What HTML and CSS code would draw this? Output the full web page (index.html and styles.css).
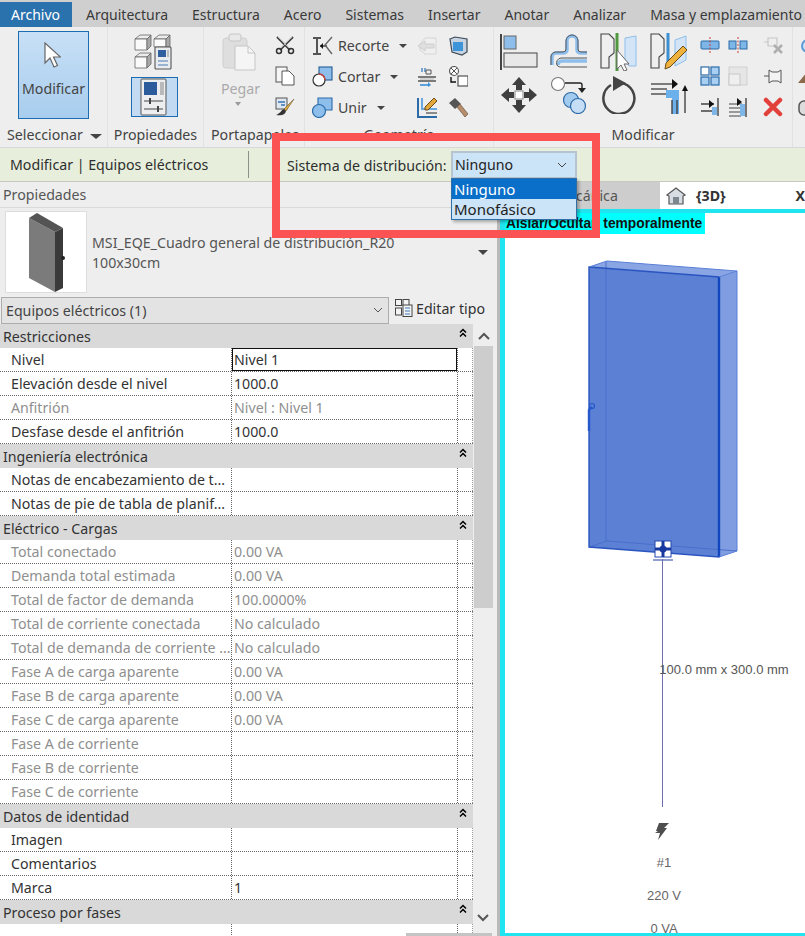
FILE: index.html
```html
<!DOCTYPE html>
<html lang="es">
<head>
<meta charset="utf-8">
<title>Modificar | Equipos eléctricos</title>
<link rel="stylesheet" href="styles.css">
</head>
<body>
<svg class="defs" width="0" height="0"><symbol id="dbl" viewBox="0 0 8 10"><path d="M1 4.500l3-3 3 3M1 8.500l3-3 3 3" fill="none" stroke="#000" stroke-width="1.500"/></symbol></svg>
<div class="app">
  <nav class="tabs">
    <span class="tab active">Archivo</span>
    <span class="tab">Arquitectura</span>
    <span class="tab">Estructura</span>
    <span class="tab">Acero</span>
    <span class="tab">Sistemas</span>
    <span class="tab">Insertar</span>
    <span class="tab">Anotar</span>
    <span class="tab">Analizar</span>
    <span class="tab">Masa y emplazamiento</span>
  </nav>

  <div class="ribbon">
    <section class="group g-select">
      <div class="body">
        <button class="modify">
          <svg width="18" height="26" viewBox="0 0 18 26"><path d="M2 1v20l5-5 4 9 3.500-1.500-4-8.500h7z" fill="#fff" stroke="#666" stroke-width="1.200"/></svg>
          <span>Modificar</span>
        </button>
      </div>
      <div class="label">Seleccionar <i class="caret dark"></i></div>
    </section>

    <section class="group g-props">
      <div class="body">
        <svg class="i-types" width="38" height="37" viewBox="0 0 38 37">
          <g stroke="#666" stroke-width=".8">
            <path d="M1 6l5-4h11l-4 4z" fill="#ececec"/><path d="M1 6h12v11H1z" fill="#fafafa"/><path d="M13 6l4-4v11l-4 4z" fill="#a8a8a8"/>
            <path d="M20 6l5-4h11l-4 4z" fill="#ececec"/><path d="M20 6h12v8H20z" fill="#fafafa"/><path d="M32 6l4-4v12h-4z" fill="#a8a8a8"/>
            <path d="M1 24l5-4h11l-4 4z" fill="#ececec"/><path d="M1 24h12v11H1z" fill="#fafafa"/><path d="M13 24l4-4v11l-4 4z" fill="#a8a8a8"/>
          </g>
          <rect x="21" y="14" width="16" height="22" rx="1" fill="#e9ecef" stroke="#555" stroke-width="1.100"/>
          <rect x="24" y="17" width="8" height="7" fill="#2f5f9e"/>
          <rect x="33" y="17" width="2" height="7" fill="#bbb"/>
          <path d="M24 28h10M24 32h10" stroke="#4a79b5" stroke-width="1.200"/>
        </svg>
        <div class="props-btn">
          <svg width="27" height="38" viewBox="0 0 27 38">
            <rect x="1" y="1" width="25" height="36" rx="1" fill="#eceef0" stroke="#555"/>
            <rect x="4" y="4" width="13" height="13" fill="#2c5c9c"/>
            <rect x="20" y="4" width="4" height="13" fill="#b9b9b9"/>
            <path d="M4 23h19M4 31h19" stroke="#444" stroke-width="1.200"/>
            <path d="M10 20v6M18 28v6" stroke="#444" stroke-width="2"/>
          </svg>
        </div>
      </div>
      <div class="label">Propiedades</div>
    </section>

    <section class="group g-clip">
      <div class="body">
        <div class="paste">
          <svg width="34" height="38" viewBox="0 0 34 38">
            <rect x="1" y="5" width="24" height="30" rx="3" fill="#dedede" stroke="#cfcfcf"/>
            <rect x="7" y="1" width="12" height="7" rx="2" fill="#e9e9e9" stroke="#c5c5c5"/>
            <path d="M13 13h13l7 7v17H13z" fill="#f5f5f5" stroke="#c5c5c5"/>
            <path d="M26 13v7h7" fill="none" stroke="#c5c5c5"/>
          </svg>
          <span class="pegar">Pegar</span>
          <i class="caret pale"></i>
        </div>
        <div class="stack">
          <svg width="20" height="20" viewBox="0 0 20 20"><path d="M2 2l13 13M18 2L5 15" stroke="#444" stroke-width="2"/><path d="M3 2l12 12M17 2L5 14" stroke="#ddd" stroke-width=".7"/><circle cx="4" cy="16" r="2.500" fill="none" stroke="#333" stroke-width="1.500"/><circle cx="16" cy="16" r="2.500" fill="none" stroke="#333" stroke-width="1.500"/></svg>
          <svg width="20" height="20" viewBox="0 0 20 20"><rect x="1" y="1" width="11" height="15" fill="#f6f6f6" stroke="#555"/><path d="M7 5h7l5 5v9H7z" fill="#fff" stroke="#555"/></svg>
          <svg width="20" height="20" viewBox="0 0 20 20"><rect x="1" y="1" width="11" height="11" fill="#dfe7f0" stroke="#555"/><path d="M3 5h7M6 8h4" stroke="#3a76b8" stroke-width="1.300"/><path d="M19 2L9 12l2 2z" fill="#e0a63a" stroke="#6a5a30" stroke-width=".6"/><path d="M9 12c-3 1-3 4-8 6 6 1 9 0 10-4z" fill="#333"/></svg>
        </div>
      </div>
      <div class="label">Portapapeles</div>
    </section>

    <section class="group g-geom">
      <div class="body">
        <div class="cmd">
          <svg width="21" height="20" viewBox="0 0 21 20"><path d="M1 2h8M1 18h8M5 2v16" stroke="#555" stroke-width="2" fill="none"/><path d="M8 10h7" stroke="#111" stroke-width="1.200"/><path d="M8 10l3-3v6z" fill="#111"/><path d="M20 1l-7 8 7 9" fill="none" stroke="#666" stroke-width="1.400"/></svg>
          <span>Recorte</span><i class="caret dark"></i>
        </div>
        <svg width="20" height="20" viewBox="0 0 20 20"><path d="M8 2h11v16H8l-5-4V8z" fill="#efefef" stroke="#d5d5d5"/><path d="M1 10l7-5v3h9v4H8v3z" fill="#dfdfdf" stroke="#cfcfcf"/></svg>
        <svg width="20" height="20" viewBox="0 0 20 20"><path d="M2 3l5-2 12 2v13l-5 3-10-3z" fill="#c7d3e0" stroke="#3d4a58" stroke-width="1.200"/><rect x="5" y="6" width="10" height="9" fill="#3d94d8"/></svg>
        <div class="cmd">
          <svg width="21" height="21" viewBox="0 0 21 21"><rect x="7" y="1" width="13" height="13" fill="#8ebfec" stroke="#245c94" stroke-width="1.100"/><circle cx="7" cy="14" r="6" fill="#fff" stroke="#333" stroke-width="1.200"/><path d="M7 8a6 6 0 0 1 6 6" fill="none" stroke="#c6433f" stroke-width="1.500"/></svg>
          <span>Cortar</span><i class="caret dark"></i>
        </div>
        <svg width="20" height="20" viewBox="0 0 20 20"><path d="M5 1v4M8 1v4" stroke="#3a7fc0" stroke-width="1.300"/><path d="M1 10h18M1 14h18" stroke="#555" stroke-width="1.300"/><path d="M9 3h5v4H9z" fill="#eee" stroke="#555"/><path d="M3 18h8" stroke="#3b8fd6" stroke-width="1.600"/><path d="M11 15l3 3-3 2z" fill="#3b8fd6"/><path d="M3 11h14v2H3z" fill="#d2d2d2"/></svg>
        <svg width="20" height="21" viewBox="0 0 20 21"><circle cx="6" cy="5" r="4.500" fill="#fff" stroke="#555" stroke-width="1.100"/><path d="M3 2l6 6M9 2L3 8" stroke="#555"/><rect x="10" y="10" width="10" height="10" fill="#fff" stroke="#444" stroke-width="1.100"/><path d="M3 11v5h5" fill="none" stroke="#111" stroke-width="1.400"/></svg>
        <div class="cmd">
          <svg width="21" height="21" viewBox="0 0 21 21"><path d="M6 1h14v12H6z" fill="#8ebfec" stroke="#2b6ba8" stroke-width="1.100"/><circle cx="7" cy="14" r="6.500" fill="#8ebfec" stroke="#2b6ba8" stroke-width="1.200"/></svg>
          <span>Unir</span><i class="caret dark"></i>
        </div>
        <svg width="21" height="21" viewBox="0 0 21 21"><path d="M1 1v19h19" fill="none" stroke="#2b6ba8" stroke-width="2"/><path d="M5 1v11h15" fill="none" stroke="#6aa9e0" stroke-width="2"/><path d="M8 10l9-9 3 3-9 9-3 0z" fill="#e2a83c" stroke="#6a4d18"/><path d="M9 16h11" stroke="#555" stroke-width="1.300"/></svg>
        <svg width="21" height="21" viewBox="0 0 21 21"><path d="M1 6l6-5 6 6-6 5z" fill="#555"/><path d="M9 10l3-3 8 10-3 3z" fill="#b58d6c" stroke="#6d543e" stroke-width=".7"/></svg>
      </div>
      <div class="label">Geometría</div>
    </section>

    <section class="group g-mod">
      <div class="body">
        <div class="big">
          <svg width="38" height="38" viewBox="0 0 38 38"><path d="M1 1v36" stroke="#444" stroke-width="2"/><rect x="4" y="3" width="12" height="13" fill="#8ebfec" stroke="#666"/><rect x="4" y="20" width="33" height="14" fill="#e8e8e8" stroke="#555" stroke-width="1.100"/></svg>
          <svg width="38" height="38" viewBox="0 0 38 38"><path d="M2 32v-8a4 4 0 0 1 4-4h8a3 3 0 0 0 3-3V8a5 5 0 0 1 10 0v9a3 3 0 0 0 3 3h7M37 28H12a4 4 0 0 0-4 4" fill="none" stroke="#8ebfec" stroke-width="3.500"/><path d="M1 32v-8a5 5 0 0 1 5-5h7a3 3 0 0 0 3-3V8a6 6 0 0 1 12 0v8a3 3 0 0 0 3 3h6M37 25H11a5 5 0 0 0-4 7c1 2 3 2 5 2h25" fill="none" stroke="#555"/></svg>
          <svg width="38" height="38" viewBox="0 0 38 38"><path d="M1 1h8l5 5v14l-5 4v11H1z" fill="#efefef" stroke="#444" stroke-width="1.100"/><path d="M25 5l11-2v30l-7 0-4-6z" fill="#d2e4f6" stroke="#8ebfec"/><path d="M17 0v38" stroke="#4f9a3e" stroke-width="3"/><path d="M17 17v19l4-4 3 6 3-1-3-6h5z" fill="#fff" stroke="#666"/></svg>
          <svg width="38" height="38" viewBox="0 0 38 38"><path d="M1 1h8l5 5v14l-5 4v11H1z" fill="#efefef" stroke="#444" stroke-width="1.100"/><path d="M25 7l11-4v24l-11 6z" fill="#d2e4f6" stroke="#8ebfec"/><path d="M18 0v34" stroke="#3c8fd0" stroke-width="3"/><path d="M16 30l17-17 4 4-17 17-5 2z" fill="#efb23c" stroke="#6a4d18"/></svg>
          <svg width="38" height="38" viewBox="0 0 38 38"><path d="M19 1l7 8h-4v5h-6V9h-4zM19 37l7-8h-4v-5h-6v5h-4zM1 19l8-7v4h5v6H9v4zM37 19l-8-7v4h-5v6h5v4z" fill="#3e3e3e"/><rect x="15" y="15" width="8" height="8" fill="#fff" stroke="#888"/></svg>
          <svg width="38" height="38" viewBox="0 0 38 38"><circle cx="8" cy="8" r="6.500" fill="#fff" stroke="#777" stroke-width="1.100"/><path d="M15 7h15a2 2 0 0 1 2 2v4" fill="none" stroke="#222" stroke-width="1.400"/><path d="M28 12h8l-4 5z" fill="#222"/><circle cx="21" cy="24" r="7.500" fill="#a3cbef" stroke="#2b6ba8" stroke-width="1.200"/><circle cx="28" cy="30" r="7.500" fill="#c5def5" stroke="#2b6ba8" stroke-width="1.200"/></svg>
          <svg width="36" height="38" viewBox="0 0 36 38"><path d="M11 9a15.500 15.500 0 1 0 10-2" fill="none" stroke="#444" stroke-width="2.500"/><path d="M13 0l13 7-13 8z" fill="#444"/></svg>
          <svg width="38" height="38" viewBox="0 0 38 38"><path d="M1 8h22M1 13h16M1 18h16" stroke="#555" stroke-width="1.400"/><path d="M22 3l6 5-6 5z" fill="#111"/><path d="M16 14h12v8h-12zM22 14h7v24h-7z" fill="#6bb0ea"/><path d="M22 24v14M27 24v14M35 37V14" stroke="#444" stroke-width="1.400"/><path d="M32 15l3-6 3 6z" fill="#111"/></svg>
        </div>
        <div class="small">
          <svg width="20" height="16" viewBox="0 0 20 16"><rect x="1" y="4" width="18" height="8" rx="1" fill="#7fb6e8" stroke="#2b6ba8"/><path d="M10 0v16" stroke="#c4403d" stroke-dasharray="2 1.500"/></svg>
          <svg width="20" height="16" viewBox="0 0 20 16"><rect x="1" y="4" width="7" height="8" fill="#7fb6e8" stroke="#2b6ba8"/><rect x="12" y="4" width="7" height="8" fill="#7fb6e8" stroke="#2b6ba8"/><path d="M10 0v16" stroke="#c4403d" stroke-dasharray="2 1.500"/></svg>
          <svg width="20" height="18" viewBox="0 0 20 18"><path d="M1 6h4M5 2h9v8H5z" fill="none" stroke="#c6c6c6" stroke-width="1.200"/><path d="M11 9l8 8M19 9l-8 8" stroke="#aeaeae" stroke-width="2.500"/></svg>
          <svg width="20" height="20" viewBox="0 0 20 20"><g fill="#a9d0f2" stroke="#2b6ba8" stroke-width="1.200"><rect x="1" y="1" width="8" height="8" fill="#fff"/><rect x="11" y="1" width="8" height="8"/><rect x="1" y="11" width="8" height="8"/><rect x="11" y="11" width="8" height="8"/></g></svg>
          <svg width="20" height="20" viewBox="0 0 20 20"><rect x="1" y="1" width="18" height="18" fill="#e6e6e6" stroke="#d0d0d0"/><rect x="1" y="8" width="11" height="11" fill="#efefef" stroke="#c8c8c8"/></svg>
          <svg width="20" height="20" viewBox="0 0 20 20"><path d="M1 10h5M6 4l3 2h6l3-2v13l-3-2H9l-3 2z" fill="#f3f3f3" stroke="#555"/></svg>
          <svg width="20" height="20" viewBox="0 0 20 20"><path d="M1 7h13M1 14h12" stroke="#444" stroke-width="1.400"/><path d="M9 3l5 4-5 4z" fill="#111"/><rect x="12" y="10" width="5" height="8" fill="#7fb6e8"/><path d="M18 1v18" stroke="#444" stroke-width="1.400"/></svg>
          <svg width="20" height="20" viewBox="0 0 20 20"><path d="M1 7h13M1 11h12M1 15h12M1 19h12" stroke="#444" stroke-width="1.100"/><path d="M9 1l5 4-5 4z" fill="#111"/><rect x="12" y="7" width="5" height="12" fill="#7fb6e8"/><path d="M18 1v19" stroke="#444" stroke-width="1.400"/></svg>
          <svg width="20" height="20" viewBox="0 0 20 20"><path d="M3 3l14 14M17 3L3 17" stroke="#e2403a" stroke-width="4.500" stroke-linecap="round"/></svg>
        </div>
      </div>
      <div class="label">Modificar</div>
    </section>

    <section class="group g-end">
      <div class="body">
        <svg width="20" height="20" viewBox="0 0 20 20"><circle cx="10" cy="10" r="6" fill="#cfe3f6" stroke="#5b9ad4" stroke-width="2"/></svg>
        <svg width="20" height="20" viewBox="0 0 20 20"><path d="M0 16L10 4v12z" fill="#8a6a4a"/></svg>
        <svg width="20" height="20" viewBox="0 0 20 20"><rect x="1" y="3" width="12" height="14" rx="5" fill="#dcdcdc" stroke="#555" stroke-width="1.500"/></svg>
      </div>
    </section>
  </div>

  <div class="optbar">
    <div class="ctx">Modificar | Equipos eléctricos</div>
    <span class="sys">Sistema de distribución:</span>
    <div class="select">
      <span>Ninguno</span>
      <svg width="10" height="6" viewBox="0 0 10 6"><path d="M1 1l4 4 4-4" fill="none" stroke="#444"/></svg>
      <ul class="menu">
        <li class="on">Ninguno</li>
        <li>Monofásico</li>
      </ul>
    </div>
  </div>

  <main class="main">
    <aside class="panel">
      <header class="p-title">Propiedades</header>
      <div class="type">
        <div class="preview">
          <svg width="36" height="80" viewBox="0 0 36 80">
            <path d="M0 5l26 14v60L0 65z" fill="#7b7b7b"/>
            <path d="M26 19l8-4v60l-8 4z" fill="#3a3a3a"/>
            <path d="M0 5l8-5 26 15-8 4z" fill="#545454"/>
            <circle cx="34" cy="45" r="2" fill="#222"/>
          </svg>
        </div>
        <div class="type-name">MSI_EQE_Cuadro general de distribución_R20<br>100x30cm</div>
        <i class="caret dark type-caret"></i>
      </div>
      <div class="filter">
        <div class="combo">
          <span>Equipos eléctricos (1)</span>
          <svg width="10" height="6" viewBox="0 0 10 6"><path d="M1 1l4 4 4-4" fill="none" stroke="#555"/></svg>
        </div>
        <div class="edit">
          <svg width="18" height="18" viewBox="0 0 18 18"><g fill="#f4f4f4" stroke="#444"><rect x=".5" y=".5" width="6" height="6"/><rect x="8" y=".5" width="6" height="6"/><rect x=".5" y="9" width="6" height="7"/><rect x="8" y="6" width="9" height="11.500"/></g><path d="M10 9h5M10 12h5M10 15h5" stroke="#3a76b8"/></svg>
          <span>Editar tipo</span>
        </div>
      </div>
      <div class="scrollarea">
        <div class="table">
          <div class="sec"><span>Restricciones</span><svg class="up"><use href="#dbl"/></svg></div>
          <div class="row"><span>Nivel</span><span class="val"><em class="input">Nivel 1</em></span><span></span></div>
          <div class="row"><span>Elevación desde el nivel</span><span class="val">1000.0</span><span></span></div>
          <div class="row off"><span>Anfitrión</span><span class="val">Nivel : Nivel 1</span><span></span></div>
          <div class="row"><span>Desfase desde el anfitrión</span><span class="val">1000.0</span><span></span></div>
          <div class="sec"><span>Ingeniería electrónica</span><svg class="up"><use href="#dbl"/></svg></div>
          <div class="row"><span>Notas de encabezamiento de t...</span><span class="val"></span><span></span></div>
          <div class="row"><span>Notas de pie de tabla de planif...</span><span class="val"></span><span></span></div>
          <div class="sec"><span>Eléctrico - Cargas</span><svg class="up"><use href="#dbl"/></svg></div>
          <div class="row off"><span>Total conectado</span><span class="val">0.00 VA</span><span></span></div>
          <div class="row off"><span>Demanda total estimada</span><span class="val">0.00 VA</span><span></span></div>
          <div class="row off"><span>Total de factor de demanda</span><span class="val">100.0000%</span><span></span></div>
          <div class="row off"><span>Total de corriente conectada</span><span class="val">No calculado</span><span></span></div>
          <div class="row off"><span>Total de demanda de corriente ...</span><span class="val">No calculado</span><span></span></div>
          <div class="row off"><span>Fase A de carga aparente</span><span class="val">0.00 VA</span><span></span></div>
          <div class="row off"><span>Fase B de carga aparente</span><span class="val">0.00 VA</span><span></span></div>
          <div class="row off"><span>Fase C de carga aparente</span><span class="val">0.00 VA</span><span></span></div>
          <div class="row off"><span>Fase A de corriente</span><span class="val"></span><span></span></div>
          <div class="row off"><span>Fase B de corriente</span><span class="val"></span><span></span></div>
          <div class="row off"><span>Fase C de corriente</span><span class="val"></span><span></span></div>
          <div class="sec"><span>Datos de identidad</span><svg class="up"><use href="#dbl"/></svg></div>
          <div class="row"><span>Imagen</span><span class="val"></span><span></span></div>
          <div class="row"><span>Comentarios</span><span class="val"></span><span></span></div>
          <div class="row"><span>Marca</span><span class="val">1</span><span></span></div>
          <div class="sec"><span>Proceso por fases</span><svg class="up"><use href="#dbl"/></svg></div>
          <div class="row"><span></span><span class="val"></span><span></span></div>
        </div>
        <div class="scrollbar">
          <svg width="12" height="8" viewBox="0 0 12 8"><path d="M1 7l5-5 5 5" fill="none" stroke="#555" stroke-width="2"/></svg>
          <div class="thumb"></div>
          <svg class="down" width="12" height="8" viewBox="0 0 12 8"><path d="M1 1l5 5 5-5" fill="none" stroke="#555" stroke-width="2"/></svg>
        </div>
        <div class="apply"></div>
      </div>
    </aside>

    <section class="view">
      <div class="vtabs">
        <span class="vtab-off">Mecánica</span>
        <div class="vtab-on">
          <svg width="20" height="20" viewBox="0 0 20 20"><path d="M1 9l9-7 9 7-2 1v8H3v-8z" fill="#d7dde2" stroke="#555" stroke-width="1.200"/><rect x="7" y="11" width="6" height="7" fill="#7c8790"/></svg>
          <b>{3D}</b>
          <b class="close">X</b>
        </div>
      </div>
      <div class="canvas">
        <span class="isolate">Aislar/Ocultar temporalmente</span>
        <svg class="model" width="170" height="320" viewBox="0 0 170 320">
          <path d="M2 26l130 10v280L2 306z" fill="#5b80d4"/>
          <path d="M132 36l18-6v280l-18 6z" fill="#7f9de0"/>
          <path d="M2 26l18-6 130 10-18 6z" fill="#8aa5e4"/>
          <path d="M19 20v280M2 306l18-6 130 10" fill="none" stroke="#4a6fcb"/>
          <path d="M2 26l130 10v280L2 306z" fill="none" stroke="#2a55c0" stroke-width="1.400"/>
          <path d="M132 36v280" stroke="#1245c0" stroke-width="2.400"/>
          <path d="M132 36l18-6v280l-18 6M2 26l18-6 130 10" fill="none" stroke="#5a7fd8"/>
          <path d="M2 190v-21l3-3" fill="none" stroke="#2458cc" stroke-width="2.400"/>
          <circle cx="5" cy="165" r="2.500" fill="none" stroke="#2458cc" stroke-width="1.200"/>
          <path d="M66 319h20" stroke="#223f99"/>
          <rect x="68" y="300" width="16" height="16" fill="#fff" stroke="#2247b0"/>
          <path d="M76 300v16M68 308h16" stroke="#16389f" stroke-width="3"/>
          <circle cx="76" cy="308" r="3.500" fill="#16389f"/>
        </svg>
        <div class="wire"></div>
        <span class="note dim">100.0 mm x 300.0 mm</span>
        <svg class="bolt" width="14" height="17" viewBox="0 0 14 17"><path d="M4 0h10L9 5h3l-9 12 2-7H0l3-2H1z" fill="#4e4e4e"/></svg>
        <span class="note n1">#1</span>
        <span class="note n2">220 V</span>
        <span class="note n3">0 VA</span>
      </div>
    </section>
  </main>

  <div class="highlight"></div>
</div>
</body>
</html>
```

FILE: styles.css
```css
* { box-sizing: border-box; }
html, body { margin: 0; padding: 0; }
body { width: 805px; height: 936px; overflow: hidden; background: #fff; font-family: "Noto Sans", "Open Sans", sans-serif; font-size: 14.2px; color: #2e2e2e; }
svg { display: block; flex: none; }
.defs { position: absolute; }
.app { position: relative; width: 805px; height: 936px; overflow: hidden; display: flex; flex-direction: column; }

.tabs { height: 27px; flex: none; display: flex; align-items: stretch; padding-top: 2px; background: #cfcfcf; white-space: nowrap; font-size: 14px; overflow: hidden; }
.tab { flex: none; padding: 0 12px; line-height: 26px; color: #3a3a3a; }
.tab.active { width: 72px; padding: 0 0 0 11px; margin-right: 2px; background: #2a72ae; color: #fff; }

.ribbon { height: 121px; flex: none; display: flex; background: #eeeeee; border-bottom: 1px solid #d8d8d8; overflow: hidden; }
.group { flex: none; display: flex; flex-direction: column; border-right: 1px solid #e2e2e2; }
.body { height: 97px; flex: none; }
.label { height: 23px; line-height: 22px; text-align: center; color: #444; white-space: nowrap; }
.g-select { width: 108px; }
.g-props { width: 96px; }
.g-clip { width: 101px; }
.g-geom { width: 189px; }
.g-mod { width: 299px; }
.g-end { width: 20px; border-right: 0; }

.caret { display: inline-block; width: 0; height: 0; border-left: 4px solid transparent; border-right: 4px solid transparent; border-top: 4px solid #333; vertical-align: middle; }
.caret.dark { border-top-color: #444; }
.caret.pale { border-top-color: #999; border-left-width: 3px; border-right-width: 3px; }

.g-select .label { text-align: left; padding-left: 7px; }
.g-select .label .caret { margin-left: 3px; border-left-width: 6px; border-right-width: 6px; border-top-width: 5px; }
.g-select .body { padding: 4px 0 0 18px; }
.modify { width: 71px; height: 88px; padding: 10px 0 0; display: flex; flex-direction: column; align-items: center; border: 1px solid #1c6cb2; background: linear-gradient(#c8e0f6, #a8cdee); font: inherit; color: #444; }
.modify svg { margin-left: -4px; }
.modify span { margin-top: 10px; line-height: 22px; }

.g-props .body { padding: 6px 0 0 26px; }
.props-btn { width: 47px; height: 40px; margin: 7px 0 0 -3px; padding-left: 8px; background: #c2dbf3; border: 1px solid #1c6cb2; }

.g-clip .body { display: flex; padding: 4px 0 0 14px; }
.paste { width: 57px; display: flex; flex-direction: column; align-items: flex-start; padding: 2px 0 0 4px; color: #aaa; }
.pegar { margin-top: 7px; line-height: 22px; margin-left: -1px; }
.paste .caret { margin: 2px 0 0 13px; flex: none; }
.stack { padding-top: 4px; display: grid; grid-auto-rows: 31px; }
.g-clip .label { text-align: left; padding-left: 7px; }

.g-geom .body { display: grid; grid-template-columns: 105px 31px 31px; grid-auto-rows: 31px; padding: 3px 0 0 7px; align-items: center; }
.cmd { display: flex; align-items: center; gap: 5px; color: #444; }
.cmd .caret { margin-left: 5px; }

.g-mod .body { display: flex; padding: 6px 0 0 6px; }
.big { display: grid; grid-template-columns: repeat(4, 50px); grid-auto-rows: 43px; width: 200px; }
.small { display: grid; grid-template-columns: 28px 35px 20px; grid-auto-rows: 31px; align-items: center; margin-top: -4px; }
.g-end .body { padding: 3px 0 0 5px; display: grid; grid-auto-rows: 31px; align-items: center; }

.optbar { height: 34px; flex: none; display: flex; align-items: center; background: #e7efdc; border-bottom: 1px solid #c5c9c0; }
.ctx { width: 249px; height: 27px; line-height: 28px; padding-left: 10px; border-right: 1px solid #8d9187; white-space: nowrap; }
.sys { margin-left: 38px; width: 164px; padding-top: 1px; white-space: nowrap; }
.select { position: relative; width: 126px; height: 28px; padding: 0 8px 0 2px; display: flex; align-items: center; justify-content: space-between; background: #cce4f7; border: 2px solid #b6c4d0; color: #222; }
.menu { position: absolute; z-index: 3; left: -2px; top: 25px; width: 126px; height: 42px; margin: 0; padding: 0; list-style: none; background: #cce4f7; border: 1px solid #2f6ea6; box-shadow: 2px 2px 3px rgba(0,0,0,.3); }
.menu li { height: 20px; line-height: 20px; padding-left: 2px; font-size: 15px; }
.menu li.on { background: #0a6fc9; color: #fff; }

.main { flex: 1; min-height: 0; display: flex; }
.panel { width: 500px; flex: none; background: #eeeeee; border-right: 3px solid #b9b9b9; display: flex; flex-direction: column; }
.p-title { height: 26px; flex: none; line-height: 26px; padding-left: 3px; color: #555; border-bottom: 1px solid #dadada; }
.type { position: relative; height: 87px; flex: none; display: flex; align-items: flex-start; padding: 3px 0 0 5px; color: #555; }
.preview { width: 82px; height: 82px; padding: 1px 0 0 23px; background: #fff; border: 1px solid #ddd; }
.type-name { margin: 22px 0 0 5px; line-height: 20px; white-space: nowrap; }
.type-caret { position: absolute; right: 9px; top: 42px; border-left-width: 5px; border-right-width: 5px; border-top-width: 5px; }
.filter { height: 29px; flex: none; display: flex; align-items: center; padding-left: 1px; }
.combo { width: 388px; height: 27px; margin-top: 1px; padding: 0 5px 0 4px; display: flex; align-items: center; justify-content: space-between; background: #e3e3e3; border: 1px solid #acacac; color: #444; }
.edit { margin-left: 6px; display: flex; align-items: center; gap: 3px; color: #333; margin-top: -3px; }
.scrollarea { position: relative; flex: 1; min-height: 0; display: flex; overflow: hidden; }
.table { width: 473px; flex: none; background: #fff; }
.sec { height: 24px; padding: 0 6px 0 3px; display: flex; justify-content: space-between; align-items: center; background: #d9d9d9; color: #333; }
.up { width: 8px; height: 10px; margin-top: -6px; }
.row { height: 24px; display: grid; grid-template-columns: 232px 226px 15px; line-height: 23px; border-bottom: 1px dotted #666; color: #333; white-space: nowrap; }
.row > span { padding-left: 11px; overflow: hidden; border-right: 1px dotted #666; }
.row > span.val { padding-left: 2px; }
.row > span:last-child { border-right: 1px dotted #999; padding: 0; }
.row.off { color: #8f8f8f; }
.input { display: block; height: 23px; margin: 0 0 0 -2px; padding-left: 1px; border: 1px solid #111; font-style: normal; line-height: 21px; color: #333; }
.scrollbar { position: relative; width: 19px; height: 100%; margin-left: 1px; display: flex; flex-direction: column; align-items: center; padding-top: 8px; }
.thumb { width: 19px; height: 262px; margin-top: 6px; background: #cdcdcd; }
.down { position: absolute; top: 590px; left: 3px; }
.apply { position: absolute; left: 406px; top: 609px; width: 86px; height: 4px; background: #c4c4c4; }

.view { flex: 1; min-width: 0; display: flex; flex-direction: column; background: #fff; }
.vtabs { height: 27px; flex: none; display: flex; background: #cdcdcd; overflow: hidden; }
.vtab-off { flex: none; width: 160px; padding-left: 55px; line-height: 28px; color: #555; }
.vtab-on { flex: 1; display: flex; align-items: center; background: #fff; padding-left: 6px; gap: 10px; color: #333; }
.close { margin-left: auto; }
.canvas { position: relative; flex: 1; min-height: 0; border: solid #20e4ef; border-width: 4px 0 3px 5px; overflow: hidden; font-family: "Liberation Sans", sans-serif; }
.isolate { position: absolute; left: 0; top: 0; height: 21px; padding: 0 3px 0 1px; line-height: 21px; background: #00ffff; color: #111; font-weight: 700; font-size: 13.800px; word-spacing: 3px; white-space: nowrap; }
.model { position: absolute; left: 82px; top: 28px; }
.wire { position: absolute; left: 157px; top: 346px; width: 1px; height: 248px; background: #6e6fb0; }
.note { position: absolute; transform: translateX(-50%); left: 159px; color: #666; font-size: 13px; line-height: 16px; white-space: nowrap; }
.dim { left: 219px; top: 449px; color: #555; }
.bolt { position: absolute; left: 150px; top: 610px; }
.n1 { top: 642px; }
.n2 { top: 675px; }
.n3 { top: 708px; }

.highlight { position: absolute; z-index: 5; left: 272px; top: 133px; width: 328px; height: 105px; border: 8px solid #fb5253; pointer-events: none; }
```
